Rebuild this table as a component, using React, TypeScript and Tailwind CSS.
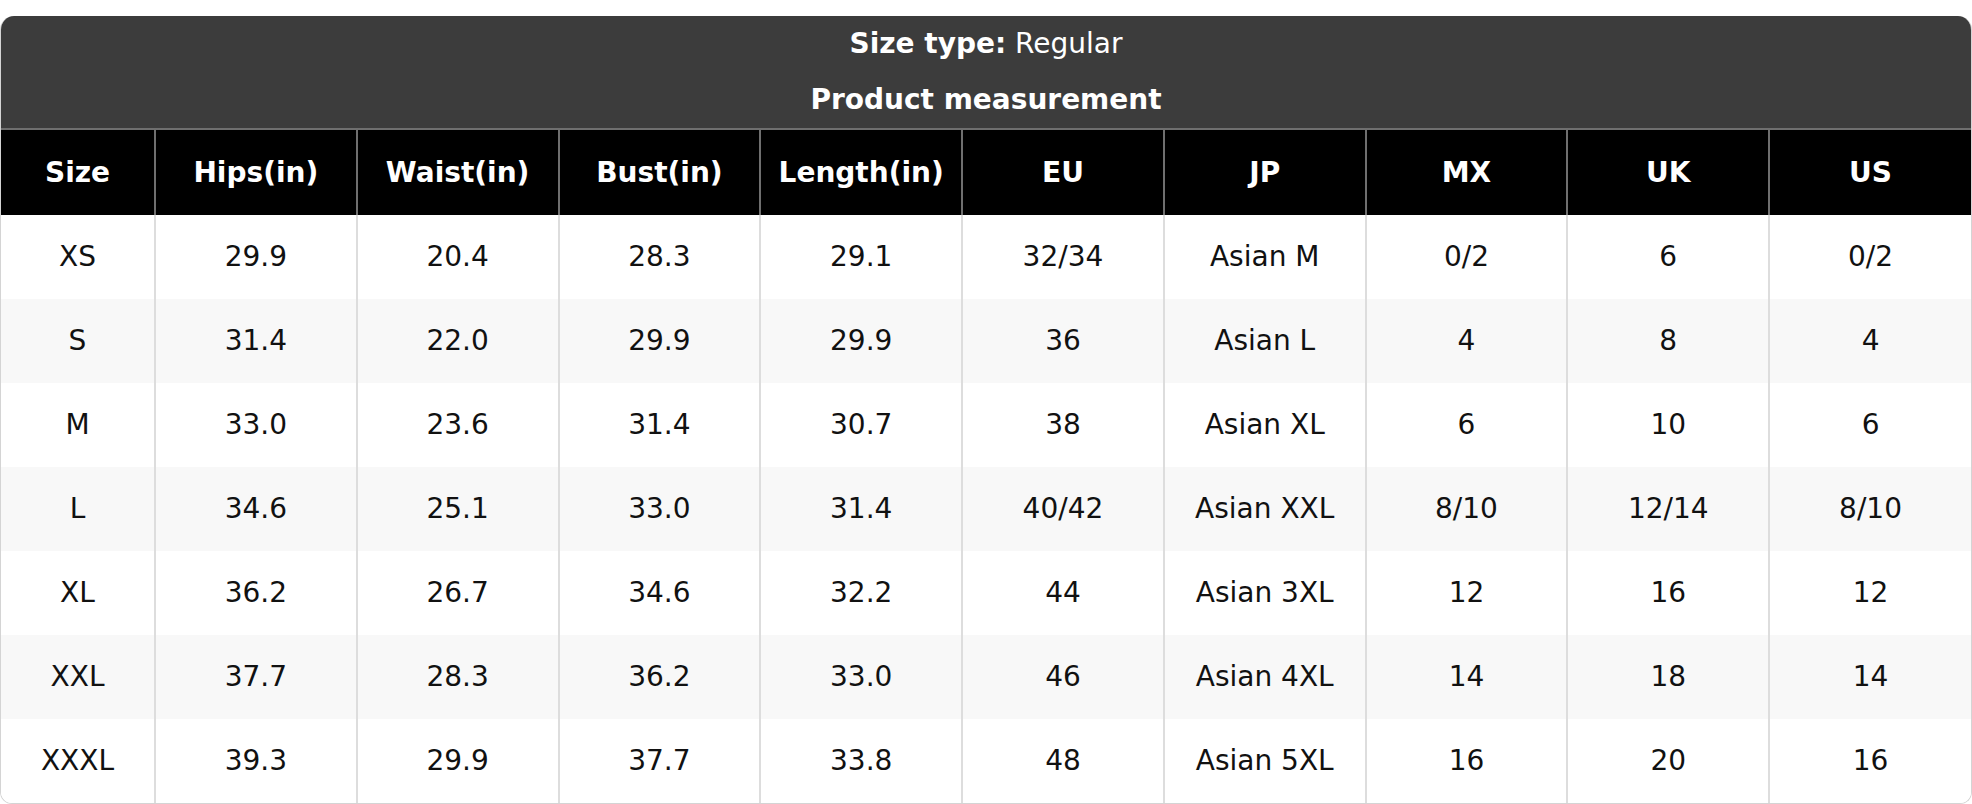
import React from "react";

const headers = ["Size", "Hips(in)", "Waist(in)", "Bust(in)", "Length(in)", "EU", "JP", "MX", "UK", "US"];
const rows = [
  ["XS", "29.9", "20.4", "28.3", "29.1", "32/34", "Asian M", "0/2", "6", "0/2"],
  ["S", "31.4", "22.0", "29.9", "29.9", "36", "Asian L", "4", "8", "4"],
  ["M", "33.0", "23.6", "31.4", "30.7", "38", "Asian XL", "6", "10", "6"],
  ["L", "34.6", "25.1", "33.0", "31.4", "40/42", "Asian XXL", "8/10", "12/14", "8/10"],
  ["XL", "36.2", "26.7", "34.6", "32.2", "44", "Asian 3XL", "12", "16", "12"],
  ["XXL", "37.7", "28.3", "36.2", "33.0", "46", "Asian 4XL", "14", "18", "14"],
  ["XXXL", "39.3", "29.9", "37.7", "33.8", "48", "Asian 5XL", "16", "20", "16"],
];

export default function App() {
  return (
    <div className="bg-white pt-[16px]" style={{ fontFamily: '"DejaVu Sans", sans-serif' }}>
      <div className="rounded-t-[14px] rounded-b-[12px] overflow-hidden border-x border-b border-[#d4d4d4] bg-white">
        <div className="bg-[#3c3c3c] text-white text-center pt-[10px] pb-[10px] flex flex-col gap-[20px]">
          <div className="h-[36px] leading-[36px] text-[28px]">
            <span className="font-bold">Size type:</span> Regular
          </div>
          <div className="h-[36px] leading-[36px] text-[28px] font-bold">Product measurement</div>
        </div>
        <table className="w-full table-fixed border-collapse text-[28px]">
          <colgroup>
            <col className="w-[154px]" />
            {headers.slice(1).map((h) => (
              <col key={h} />
            ))}
          </colgroup>
          <thead>
            <tr className="bg-black text-white h-[86px] border-t-2 border-[#6f6f6f]">
              {headers.map((h, i) => (
                <th
                  key={h}
                  className={`font-bold text-center p-0 ${i > 0 ? "border-l-2 border-[#6f6f6f]" : ""}`}
                >
                  {h}
                </th>
              ))}
            </tr>
          </thead>
          <tbody>
            {rows.map((r, ri) => (
              <tr key={ri} className={`h-[84px] ${ri % 2 === 1 ? "bg-[#f8f8f8]" : "bg-white"}`}>
                {r.map((c, ci) => (
                  <td
                    key={ci}
                    className={`text-center p-0 text-[#111] ${ci > 0 ? "border-l-2 border-[#dddddd]" : ""}`}
                  >
                    {c}
                  </td>
                ))}
              </tr>
            ))}
          </tbody>
        </table>
      </div>
    </div>
  );
}
